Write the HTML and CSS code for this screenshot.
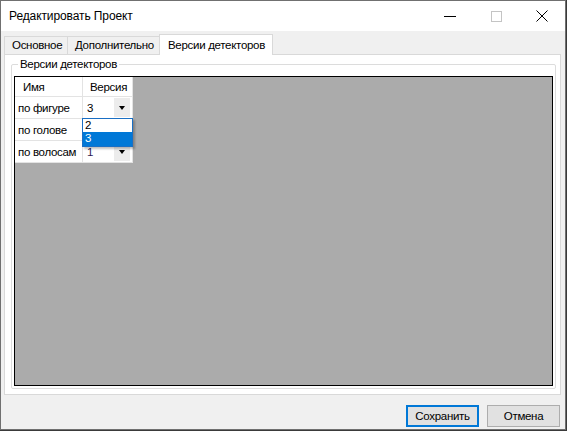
FILE: index.html
```html
<!DOCTYPE html>
<html lang="ru">
<head>
<meta charset="utf-8">
<title>Редактировать Проект</title>
<link rel="stylesheet" href="styles.css">
</head>
<body>
<div class="window">
  <div class="titlebar">
    <div class="title">Редактировать Проект</div>
    <div class="controls">
      <span class="ctl"><svg width="12" height="12" viewBox="0 0 12 12"><line x1="0" y1="6.5" x2="12" y2="6.5" stroke="#000" stroke-width="1"/></svg></span>
      <span class="ctl"><svg width="12" height="12" viewBox="0 0 12 12"><rect x="1.5" y="1.5" width="10" height="10" fill="none" stroke="#c4c4c4" stroke-width="1"/></svg></span>
      <span class="ctl"><svg width="12" height="12" viewBox="0 0 12 12"><path d="M0.5 0.5 L11.5 11.5 M11.5 0.5 L0.5 11.5" stroke="#000" stroke-width="1"/></svg></span>
    </div>
  </div>
  <div class="client">
    <div class="tabs">
      <div class="tab t1">Основное</div>
      <div class="tab t2">Дополнительно</div>
      <div class="tab active">Версии детекторов</div>
    </div>
    <div class="panel">
      <div class="group">
        <div class="legend">Версии детекторов</div>
        <div class="grid">
          <div class="table">
            <div class="row header">
              <div class="cell c1">Имя</div>
              <div class="cell c2">Версия</div>
            </div>
            <div class="row">
              <div class="cell c1 txt">по фигуре</div>
              <div class="cell c2 combo"><span class="val">3</span><span class="btn"><span class="arrow"></span></span></div>
            </div>
            <div class="row">
              <div class="cell c1 txt">по голове</div>
              <div class="cell c2"></div>
            </div>
            <div class="row">
              <div class="cell c1 txt">по волосам</div>
              <div class="cell c2 combo"><span class="val purple">1</span><span class="btn"><span class="arrow"></span></span></div>
            </div>
          </div>
          <div class="dropdown">
            <div class="item">2</div>
            <div class="item sel">3</div>
          </div>
        </div>
      </div>
    </div>
    <div class="buttons">
      <button class="button default">Сохранить</button>
      <button class="button">Отмена</button>
    </div>
  </div>
</div>
</body>
</html>
```
FILE: styles.css
```css
* {
  box-sizing: border-box;
}
html, body {
  margin: 0;
  padding: 0;
}
body {
  background: #3a3a3a;
  width: 567px;
  height: 431px;
  overflow: hidden;
  font-family: "Liberation Sans", Arial, sans-serif;
  font-size: 11.5px;
  letter-spacing: -0.3px;
  color: #000;
}
.window {
  width: 566px;
  height: 430px;
  border: 1px solid #707070;
  background: #f0f0f0;
  display: flex;
  flex-direction: column;
}
.titlebar {
  height: 30px;
  flex-shrink: 0;
  background: #fff;
  display: flex;
  align-items: center;
  justify-content: space-between;
}
.title {
  padding-left: 8px;
  font-size: 12px;
  letter-spacing: -0.1px;
  padding-bottom: 1px;
  white-space: nowrap;
}
.controls {
  display: flex;
  align-items: center;
  padding-right: 14px;
  gap: 27px;
}
.ctl {
  width: 19px;
  display: flex;
  justify-content: center;
}
.ctl svg { display: block; }
.client {
  flex: 1;
  min-height: 0;
  display: flex;
  flex-direction: column;
  padding: 3px 4px 2px 3px;
}
.tabs {
  display: flex;
  align-items: flex-end;
  height: 20px;
  flex-shrink: 0;
}
.tab {
  height: 18px;
  line-height: 17px;
  border: 1px solid #d9d9d9;
  border-bottom: none;
  border-right: none;
  background: #f0f0f0;
  white-space: nowrap;
  flex-shrink: 0;
}
.t1 { width: 63px; padding-left: 7px; }
.t2 { width: 92px; padding-left: 7px; }
.tab.active {
  height: 21px;
  line-height: 20px;
  background: #fff;
  border-right: 1px solid #d9d9d9;
  width: 114px;
  padding-left: 8px;
  position: relative;
  z-index: 1;
  margin-bottom: -1px;
}
.panel {
  height: 341px;
  flex-shrink: 0;
  border: 1px solid #d9d9d9;
  background: #fff;
  padding: 9px 4px 5px 6px;
}
.group {
  height: 325px;
  border: 1px solid #dcdcdc;
  border-radius: 2px;
  padding: 11px 2px 2px 2px;
  position: relative;
  display: flex;
  flex-direction: column;
}
.legend {
  position: absolute;
  top: -8px;
  left: 6px;
  background: #fff;
  padding: 0 2px;
  line-height: 14px;
  white-space: nowrap;
}
.grid {
  flex: 1;
  border: 1px solid #000;
  background: #ababab;
  position: relative;
}
.table {
  width: 118px;
}
.row {
  display: flex;
  height: 22px;
  border-bottom: 1px solid #e3e3e3;
  background: #fff;
}
.row.header {
  height: 20px;
}
.cell {
  display: flex;
  align-items: center;
  white-space: nowrap;
}
.c1 {
  width: 68px;
  border-right: 1px solid #e3e3e3;
}
.c2 {
  width: 50px;
  border-right: 1px solid #e3e3e3;
}
.header .c1 { padding-left: 8px; }
.header .c2 { padding-left: 7px; }
.txt { padding-left: 3px; }
.combo {
  padding: 1px 2px 1px 4px;
  justify-content: space-between;
}
.val { line-height: 14px; }
.purple { color: #2f1b55; }
.btn {
  width: 16px;
  height: 19px;
  background: #ececec;
  display: flex;
  align-items: center;
  justify-content: center;
}
.arrow {
  width: 0;
  height: 0;
  border-left: 3.5px solid transparent;
  border-right: 3.5px solid transparent;
  border-top: 4px solid #000;
}
.dropdown {
  position: absolute;
  left: 67px;
  top: 41px;
  width: 51px;
  border: 1px solid #1a6fc4;
  background: #fff;
  box-shadow: 2px 2px 2px rgba(0,0,0,0.25);
}
.item {
  height: 13px;
  line-height: 13px;
  padding-left: 2px;
}
.item.sel {
  height: 14px;
  background: #0078d7;
  color: #fff;
}
.buttons {
  display: flex;
  justify-content: flex-end;
  gap: 8px;
  margin-top: 10px;
  padding-right: 1px;
  flex-shrink: 0;
}
.button {
  width: 73px;
  height: 22px;
  border: 1px solid #adadad;
  background: #e1e1e1;
  font-family: "Liberation Sans", Arial, sans-serif;
  font-size: 11.5px;
  letter-spacing: -0.3px;
  color: #000;
  padding: 0;
  margin: 0;
}
.button.default {
  border: 2px solid #0078d7;
}
```
